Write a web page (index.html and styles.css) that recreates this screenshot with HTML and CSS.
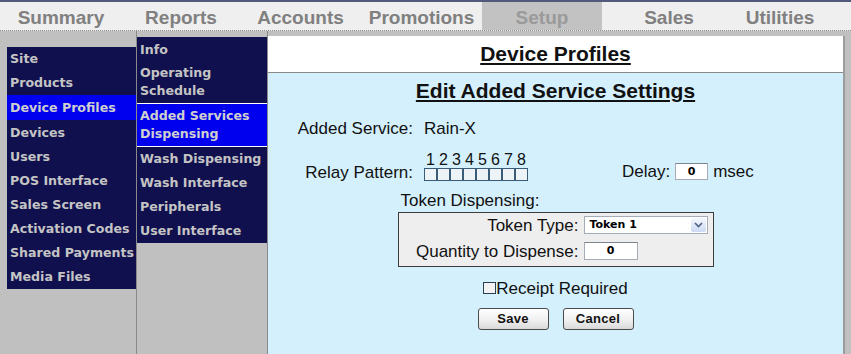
FILE: index.html
```html
<!DOCTYPE html>
<html>
<head>
<meta charset="utf-8">
<link rel="stylesheet" href="styles.css">
</head>
<body>
<div class="page">
  <div class="tabs">
    <div class="tab w1">Summary</div>
    <div class="tab w2">Reports</div>
    <div class="tab w3">Accounts</div>
    <div class="tab w4">Promotions</div>
    <div class="tab w5 active">Setup</div>
    <div class="tab w6">Sales</div>
    <div class="tab w7">Utilities</div>
    <div class="tab-fill"></div>
  </div>
  <div class="main">
    <div class="col1">
      <ul class="menu">
        <li>Site</li>
        <li>Products</li>
        <li class="active">Device Profiles</li>
        <li>Devices</li>
        <li>Users</li>
        <li>POS Interface</li>
        <li>Sales Screen</li>
        <li>Activation Codes</li>
        <li>Shared Payments</li>
        <li>Media Files</li>
      </ul>
    </div>
    <div class="col2">
      <ul class="menu sub">
        <li>Info</li>
        <li>Operating<br>Schedule</li>
        <li class="active">Added Services<br>Dispensing</li>
        <li>Wash Dispensing</li>
        <li>Wash Interface</li>
        <li>Peripherals</li>
        <li>User Interface</li>
      </ul>
    </div>
    <div class="content">
      <div class="header"><span class="u">Device Profiles</span></div>
      <div class="form">
        <h2 class="title"><span class="u">Edit Added Service Settings</span></h2>
        <div class="row r1">
          <div class="lbl">Added Service:</div>
          <div class="val">Rain-X</div>
        </div>
        <div class="row r2">
          <div class="lbl lbl-relay">Relay Pattern:</div>
          <div class="relay">
            <div class="digits"><span>1</span><span>2</span><span>3</span><span>4</span><span>5</span><span>6</span><span>7</span><span>8</span></div>
            <div class="boxes"><span></span><span></span><span></span><span></span><span></span><span></span><span></span><span></span></div>
          </div>
          <div class="delay">
            <span class="dl-text">Delay:</span>
            <span class="input in-delay">0</span>
            <span class="dl-text ms">msec</span>
          </div>
        </div>
        <div class="token">
          <div class="tok-label">Token Dispensing:</div>
          <div class="tok-box">
            <div class="tok-row">
              <div class="tok-lbl">Token Type:</div>
              <div class="select">
                <span class="sel-text">Token 1</span>
                <span class="sel-btn"><svg width="9" height="6" viewBox="0 0 9 6"><path d="M1 1 L4.5 4.5 L8 1" fill="none" stroke="#4d6185" stroke-width="1.6"/></svg></span>
              </div>
            </div>
            <div class="tok-row tr2">
              <div class="tok-lbl">Quantity to Dispense:</div>
              <span class="input in-qty">0</span>
            </div>
          </div>
        </div>
        <div class="receipt"><span class="cb"></span>Receipt Required</div>
        <div class="buttons">
          <button class="btn">Save</button>
          <button class="btn">Cancel</button>
        </div>
      </div>
    </div>
    <div class="gutter"></div>
  </div>
</div>
</body>
</html>
```

FILE: styles.css
```css
html, body {
  margin: 0;
  padding: 0;
}
body {
  background: #c0c0c0;
  font-family: "Liberation Sans", Arial, sans-serif;
  color: #000;
  overflow: hidden;
}
.page {
  width: 851px;
  height: 354px;
  display: flex;
  flex-direction: column;
}

/* top tabs */
.tabs {
  display: flex;
  height: 28px;
  border-top: 2px solid #505b7b;
  border-bottom: 1px dotted #8c8c8c;
  background: #efefef;
}
.tab {
  box-sizing: border-box;
  height: 28px;
  padding-top: 2px;
  font: bold 19px/27px "Liberation Sans", Arial, sans-serif;
  color: #808080;
  text-align: center;
  white-space: nowrap;
}
.tab.active {
  background: #c2c2c2;
  color: #9a9a9a;
}
.w1 { width: 122px; }
.w2 { width: 118px; }
.w3 { width: 121px; }
.w4 { width: 121px; }
.w5 { width: 120px; }
.w6 { width: 134px; }
.w7 { width: 88px; }
.tab-fill { flex: 1; }

/* main area */
.main {
  flex: 1;
  display: flex;
  min-height: 0;
}
.col1 {
  box-sizing: border-box;
  width: 137px;
  padding: 16px 0 0 7px;
  border-right: 1px solid #8a8a8a;
}
.col2 {
  box-sizing: border-box;
  width: 131px;
  padding-top: 6px;
  border-right: 1px solid #8a8a8a;
}
.menu {
  list-style: none;
  margin: 0;
  padding: 0;
  background: #10104e;
}
.menu li {
  font: bold 12.6px/18px "DejaVu Sans", Verdana, sans-serif;
  color: #c4c4c4;
  padding: 3px 2px 3px 3px;
  white-space: nowrap;
}
.menu li.active {
  background: #0000ee;
  color: #cfcfcf;
}
.col1 .menu li.active {
  padding-top: 4px;
  margin-bottom: 1px;
  padding-bottom: 3px;
}
.sub li {
  padding-top: 3px;
}
.sub li:first-child {
  padding-top: 4px;
  padding-bottom: 2px;
}
.sub li.active {
  border-top: 1px solid #ffffff;
  border-bottom: 1px solid #ffffff;
}

/* content */
.content {
  width: 575px;
  margin-top: 5px;
  background: #d4f0fc;
  border-right: 2px solid #9c9c9c;
  display: flex;
  flex-direction: column;
}
.gutter { flex: 1; }
.header {
  box-sizing: border-box;
  height: 37px;
  background: #fff;
  border-bottom: 1px solid #8a8a8a;
  text-align: center;
  font: bold 21px/36px "Liberation Sans", Arial, sans-serif;
  color: #111;
}
.u {
  text-decoration: underline;
  text-decoration-thickness: 2px;
  text-underline-offset: 2px;
}
.form {
  padding-top: 6px;
  display: flex;
  flex-direction: column;
}
.title {
  margin: 0;
  font: bold 21px/24px "Liberation Sans", Arial, sans-serif;
  text-align: center;
  color: #111;
}
.row {
  display: flex;
  align-items: flex-end;
  font-size: 17px;
  color: #111;
}
.lbl {
  width: 145px;
  text-align: right;
  margin-right: 11px;
}
.r1 {
  margin-top: 16px;
  line-height: 20px;
}
.r2 {
  margin-top: 13px;
  line-height: 17px;
}
.relay {
  display: flex;
  flex-direction: column;
}
.digits {
  display: flex;
  font-size: 16px;
  line-height: 15px;
}
.digits span {
  width: 13px;
  text-align: center;
}
.boxes {
  display: flex;
  margin-top: 1px;
}
.boxes span {
  width: 11px;
  height: 11px;
  border: 1px solid #3a5c78;
  background: #eef3f7;
}
.delay {
  display: flex;
  align-items: flex-end;
  margin-left: 94px;
  margin-bottom: 1px;
}
.input {
  box-sizing: border-box;
  display: block;
  background: #fff;
  border: 1px solid #a5acb5;
  border-top-color: #7b8590;
  font: bold 11px/15px "DejaVu Sans", Tahoma, sans-serif;
  text-align: center;
  color: #000;
}
.in-delay {
  width: 33px;
  height: 17px;
  margin: 0 5px;
}
.token {
  width: 316px;
  margin: 10px auto 0;
  font-size: 17px;
  color: #111;
}
.tok-label {
  line-height: 20px;
  padding-left: 3px;
}
.tok-box {
  margin-top: 1px;
  border: 1px solid #3c3c3c;
  background: #eeeeee;
  padding: 3px 0 6px;
}
.tok-row {
  display: flex;
  align-items: flex-end;
  height: 18px;
}
.tr2 {
  margin-top: 8px;
}
.tok-lbl {
  width: 180px;
  padding-right: 5px;
  text-align: right;
  line-height: 16px;
}
.select {
  box-sizing: border-box;
  width: 124px;
  height: 18px;
  display: flex;
  background: #fff;
  border: 1px solid #a5acb5;
}
.sel-text {
  flex: 1;
  font: bold 11px/16px "DejaVu Sans", Tahoma, sans-serif;
  padding-left: 5px;
  color: #000;
}
.sel-btn {
  width: 15px;
  margin: 1px;
  display: flex;
  align-items: center;
  justify-content: center;
  background: linear-gradient(#f4f7fd, #cdd9f3);
  border-radius: 2px;
}
.in-qty {
  width: 54px;
  height: 18px;
  line-height: 16px;
}
.receipt {
  margin-top: 12px;
  display: flex;
  justify-content: center;
  align-items: center;
  font-size: 17px;
  line-height: 20px;
  color: #111;
}
.cb {
  box-sizing: border-box;
  width: 13px;
  height: 12px;
  border: 1px solid #2a3f55;
  background: #f2f2f2;
  margin-top: -2px;
}
.buttons {
  display: flex;
  justify-content: center;
  gap: 14px;
  margin-top: 9px;
}
.btn {
  box-sizing: border-box;
  width: 71px;
  height: 22px;
  padding: 0;
  font: bold 13px/20px "Liberation Sans", Arial, sans-serif;
  letter-spacing: 0.3px;
  color: #111;
  border: 1px solid #4a4a4a;
  border-radius: 3px;
  background: linear-gradient(#ffffff, #f0f0f0 55%, #d9d9d9);
}
```
